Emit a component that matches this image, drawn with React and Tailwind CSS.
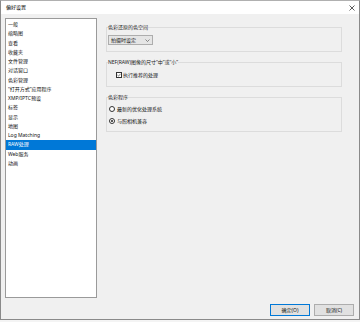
const ITEMS = [
    "一般", "缩略图", "查看", "收藏夹", "文件管理", "对话窗口", "色彩管理",
    "\u201C打开方式\u201D应用程序", "XMP/IPTC预设", "标签", "显示", "地图",
    "Log Matching", "RAW处理", "Web服务", "动画"
]

const FONT = "font-['Noto_Sans','Noto_Sans_CJK_SC',sans-serif]"

function Group({ label, className, children }) {
    return (
        <fieldset className={`border border-[#dcdcdc] ${className}`}>
            <legend className="ml-[1px] px-0 text-[5px] leading-[8px] text-[#1a1a1a]">{label}</legend>
            {children}
        </fieldset>
    )
}

export default function App() {
    return (
        <div className={`w-[360px] h-[322px] bg-[#f4f4f4] ${FONT}`}>
            <div className="w-[360px] h-[320px] flex flex-col bg-[#f0f0f0] border border-t-[#b0b0b0] border-x-[#8a8a8a] border-b-[#8a8a8a]">

                {/* title bar */}
                <div className="h-[13px] shrink-0 bg-white flex items-center justify-between pl-[5px] pr-[4px]">
                    <span className="text-[5px] leading-none text-black">偏好设置</span>
                    <svg width="6" height="6" viewBox="0 0 6 6" className="mt-[1px]">
                        <path d="M0.5 0.5 L5.5 5.5 M5.5 0.5 L0.5 5.5" stroke="#333" strokeWidth="0.8" />
                    </svg>
                </div>

                <div className="flex pt-[4px] pl-[4px] h-[284px] shrink-0">
                    {/* category list */}
                    <div className="w-[92px] h-[280px] bg-white border border-[#9a9a9a] pt-[1px]">
                        {ITEMS.map((t, i) => (
                            <div
                                key={t}
                                className={`h-[9.25px] leading-[9.25px] pl-[2px] text-[5px] ${
                                    t === "RAW处理" ? "bg-[#0078d7] text-white" : "text-[#111]"
                                }`}
                            >
                                {t}
                            </div>
                        ))}
                    </div>

                    {/* settings panel */}
                    <div className="ml-[9px] w-[236px] flex flex-col">
                        <Group label="色彩还原的色空间" className="mt-[5px] h-[29px]">
                            <div className="ml-[1px] mt-[4px] w-[45px] h-[10px] bg-[#e5e5e5] border border-[#adadad] flex items-center justify-between pl-[2px] pr-[2px]">
                                <span className="text-[5px] leading-none text-[#111]">拍摄时设定</span>
                                <svg width="5" height="3" viewBox="0 0 5 3">
                                    <path d="M0.5 0.5 L2.5 2.5 L4.5 0.5" stroke="#444" strokeWidth="0.6" fill="none" />
                                </svg>
                            </div>
                        </Group>

                        <Group label={"NEF(RAW)图像的尺寸\u201C中\u201D或\u201C小\u201D"} className="mt-[6px] h-[29px]">
                            <div className="ml-[9px] mt-[6px] flex items-center gap-[1px]">
                                <div className="w-[6px] h-[6px] border border-[#333] bg-white flex items-center justify-center">
                                    <svg width="4" height="4" viewBox="0 0 4 4">
                                        <path d="M0.4 2 L1.5 3.1 L3.6 0.8" stroke="#222" strokeWidth="0.6" fill="none" />
                                    </svg>
                                </div>
                                <span className="text-[5px] leading-none text-[#111]">执行推荐的处理</span>
                            </div>
                        </Group>

                        <Group label="色彩程序" className="mt-[6px] h-[39px]">
                            <div className="ml-[2px] mt-[5px] flex flex-col gap-[6px]">
                                <div className="flex items-center gap-[2px]">
                                    <div className="w-[6px] h-[6px] rounded-full border border-[#333] bg-white" />
                                    <span className="text-[5px] leading-none text-[#111]">最新的优化处理系统</span>
                                </div>
                                <div className="flex items-center gap-[2px]">
                                    <div className="w-[6px] h-[6px] rounded-full border border-[#333] bg-white flex items-center justify-center">
                                        <div className="w-[2.5px] h-[2.5px] rounded-full bg-[#222]" />
                                    </div>
                                    <span className="text-[5px] leading-none text-[#111]">与照相机兼容</span>
                                </div>
                            </div>
                        </Group>
                    </div>
                </div>

                {/* buttons */}
                <div className="mt-[6px] flex justify-end gap-[4px] pr-[5px]">
                    <button className="w-[40px] h-[12px] bg-[#e1e1e1] border border-[#0078d7] text-[5px] leading-none text-[#111]">
                        确定(O)
                    </button>
                    <button className="w-[40px] h-[12px] bg-[#e1e1e1] border border-[#adadad] text-[5px] leading-none text-[#111]">
                        取消(C)
                    </button>
                </div>
            </div>
        </div>
    )
}
